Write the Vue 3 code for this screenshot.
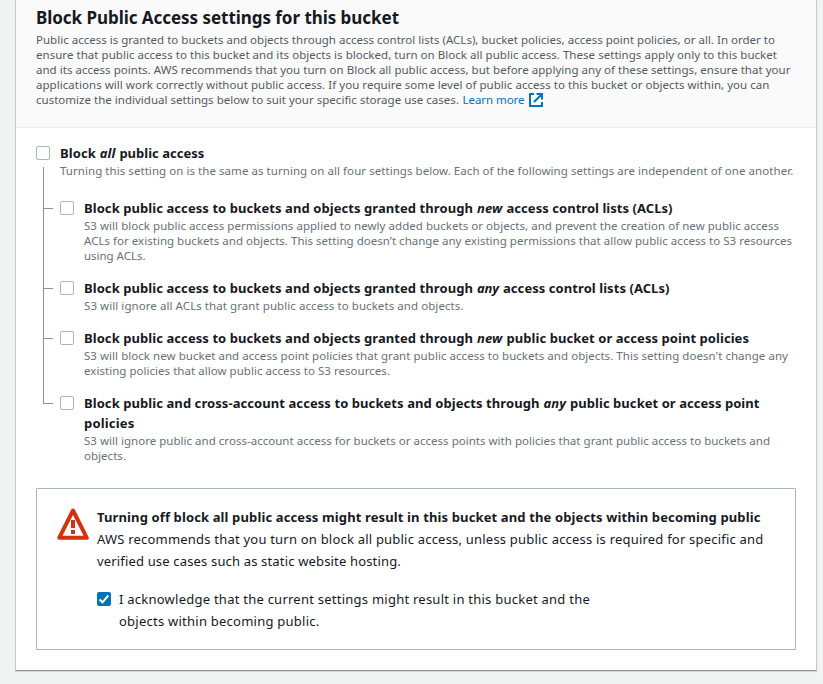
<script setup>
import { nextTick } from 'vue'

// Spreads a single line of text to the given width by adjusting its tracking.
const vFit = {
  async mounted(el, { value }) {
    await nextTick()
    const natural = el.getBoundingClientRect().width
    el.style.letterSpacing = `${(value - natural) / el.textContent.length}px`
  }
}

const intro = [
  ['Public access is granted to buckets and objects through access control lists (ACLs), bucket policies, access point policies, or all. In order to', 739],
  ['ensure that public access to this bucket and its objects is blocked, turn on Block all public access. These settings apply only to this bucket', 741],
  ['and its access points. AWS recommends that you turn on Block all public access, but before applying any of these settings, ensure that your', 754.5],
  ['applications will work correctly without public access. If you require some level of public access to this bucket or objects within, you can', 733.5]
]

const options = [
  {
    title: [['Block public access to buckets and objects granted through', 389], ['new', 25.5], ['access control lists (ACLs)', 166]],
    lines: [
      ['S3 will block public access permissions applied to newly added buckets or objects, and prevent the creation of new public access', 695],
      ["ACLs for existing buckets and objects. This setting doesn’t change any existing permissions that allow public access to S3 resources", 708],
      ['using ACLs.', 61.5]
    ]
  },
  {
    title: [['Block public access to buckets and objects granted through', 389], ['any', 22], ['access control lists (ACLs)', 166.5]],
    lines: [['S3 will ignore all ACLs that grant public access to buckets and objects.', 379.5]]
  },
  {
    title: [['Block public access to buckets and objects granted through', 389], ['new', 25.5], ['public bucket or access point policies', 242.5]],
    lines: [
      ["S3 will block new bucket and access point policies that grant public access to buckets and objects. This setting doesn't change any", 704],
      ['existing policies that allow public access to S3 resources.', 306]
    ]
  },
  {
    title: [['Block public and cross-account access to buckets and objects through', 455.5], ['any', 22.5], ['public bucket or access point', 189.5]],
    rest: ['policies', 50.5],
    lines: [
      ['S3 will ignore public and cross-account access for buckets or access points with policies that grant public access to buckets and', 686],
      ['objects.', 42]
    ]
  }
]
</script>

<template>
  <main class="page">
    <section class="card">
      <header class="card-header">
        <h2 class="heading"><span v-fit="363">Block Public Access settings for this bucket</span></h2>
        <p class="small intro">
          <span v-for="l in intro" :key="l[0]" class="line"><span v-fit="l[1]">{{ l[0] }}</span></span>
          <span class="line split">
            <span v-fit="423">customize the individual settings below to suit your specific storage use cases.</span>
            <a class="link"><span v-fit="62">Learn more</span>
              <svg class="ext" viewBox="0 0 14 14"><path d="M5 1H1v12h12V9M7.500 1H13v5.500M12.500 1.500 5 9" /></svg>
            </a>
          </span>
        </p>
      </header>

      <div class="body">
        <div class="option">
          <span class="box"></span>
          <div>
            <div class="title lead"><span v-fit="36">Block</span><em v-fit="16">all</em><span v-fit="85">public access</span></div>
            <div class="small muted"><span class="line"><span v-fit="733.3">Turning this setting on is the same as turning on all four settings below. Each of the following settings are independent of one another.</span></span></div>
          </div>
        </div>

        <ul class="tree">
          <li v-for="(o, i) in options" :key="i" class="option child">
            <span class="box"></span>
            <div>
              <div class="title">
                <span v-fit="o.title[0][1]">{{ o.title[0][0] }}</span><em v-fit="o.title[1][1]">{{ o.title[1][0] }}</em><span v-fit="o.title[2][1]">{{ o.title[2][0] }}</span>
              </div>
              <div v-if="o.rest" class="title"><span v-fit="o.rest[1]">{{ o.rest[0] }}</span></div>
              <div class="small muted">
                <span v-for="l in o.lines" :key="l[0]" class="line"><span v-fit="l[1]">{{ l[0] }}</span></span>
              </div>
            </div>
          </li>
        </ul>

        <div class="alert">
          <svg class="warn" viewBox="0 0 32 32">
            <path class="tri" d="M16 2.500 29.800 29.800H2.200Z" />
            <path class="bang" d="M14 12h4v8h-4zM14 22h4v4h-4z" />
          </svg>
          <div class="alert-text">
            <div class="strong"><span v-fit="663.5">Turning off block all public access might result in this bucket and the objects within becoming public</span></div>
            <span class="line"><span v-fit="666.5">AWS recommends that you turn on block all public access, unless public access is required for specific and</span></span>
            <span class="line"><span v-fit="304">verified use cases such as static website hosting.</span></span>
            <div class="ack">
              <span class="box checked">
                <svg viewBox="0 0 14 14"><path d="M2.500 7.500 5.500 10.300 11.300 3.500" /></svg>
              </span>
              <div>
                <span class="line"><span v-fit="471">I acknowledge that the current settings might result in this bucket and the</span></span>
                <span class="line"><span v-fit="200.5">objects within becoming public.</span></span>
              </div>
            </div>
          </div>
        </div>
      </div>
    </section>
  </main>
</template>

<style>
body {
  background: #f2f3f3;
}
</style>

<style scoped>
.page {
  box-sizing: border-box;
  height: 684px;
  padding: 0 6px 13px 15px;
  background: #f2f3f3;
  color: #16191f;
  font-family: "Noto Sans", "Open Sans", sans-serif;
  overflow: hidden;
}
.card {
  box-sizing: border-box;
  height: 671px;
  background: #fff;
  border: 1px solid #c7cccc;
  border-top: 0;
  border-bottom-color: #879196;
  box-shadow: 0 1px 1px rgba(0, 28, 36, 0.12);
}
.card-header {
  padding: 7px 20px 20px;
  background: #fafafa;
  border-bottom: 1px solid #eaeded;
}
.heading {
  margin: 0 0 3px;
  font-size: 17px;
  line-height: 22px;
  font-weight: 700;
  white-space: nowrap;
}
.small {
  margin: 0;
  font-size: 11.5px;
  line-height: 15px;
}
.intro {
  color: #545b64;
}
.muted {
  color: #687078;
}
.line {
  display: block;
  white-space: nowrap;
}
.split {
  display: flex;
  gap: 3.5px;
}
.link {
  display: flex;
  gap: 4.5px;
  color: #0073bb;
}
.ext {
  width: 14px;
  height: 14px;
  margin-top: 1px;
  fill: none;
  stroke: currentColor;
  stroke-width: 2;
}
.body {
  padding: 15px 20px 0;
}
.option {
  display: flex;
  gap: 10px;
}
.box {
  box-sizing: border-box;
  flex: none;
  width: 14px;
  height: 14px;
  margin-top: 3px;
  border: 1px solid #aab7b8;
  border-radius: 2px;
  background: #fff;
}
.title {
  display: flex;
  gap: 4px;
  font-size: 13px;
  line-height: 20px;
  font-weight: 700;
  white-space: nowrap;
}
.lead {
  gap: 3.7px;
}
.tree {
  list-style: none;
  display: flex;
  flex-direction: column;
  gap: 15px;
  margin: 20px 0 0 24px;
  padding: 0;
}
.child {
  position: relative;
}
.child::before {
  content: "";
  position: absolute;
  left: -17px;
  top: -16px;
  bottom: -11px;
  border-left: 1px solid #879596;
}
.child:first-child::before {
  top: -31px;
}
.child:last-child::before {
  bottom: auto;
  height: 27px;
}
.child::after {
  content: "";
  position: absolute;
  left: -17px;
  top: 10px;
  width: 10px;
  border-top: 1px solid #879596;
}
.alert {
  box-sizing: border-box;
  display: flex;
  gap: 8px;
  height: 162px;
  margin-top: 25px;
  padding: 17px 20px;
  border: 1px solid #aab7b8;
  border-radius: 1px;
  font-size: 13px;
  line-height: 22px;
}
.warn {
  flex: none;
  width: 32px;
  height: 32px;
  margin-top: 2px;
}
.tri {
  fill: none;
  stroke: #d13212;
  stroke-width: 4;
  stroke-linejoin: round;
}
.bang {
  fill: #d13212;
}
.strong {
  font-size: 13px;
  font-weight: 700;
  white-space: nowrap;
}
.ack {
  display: flex;
  gap: 8px;
  margin-top: 16px;
}
.ack .box {
  margin-top: 4px;
}
.checked {
  border: 0;
  background: #0073bb;
}
.checked svg {
  display: block;
  width: 14px;
  height: 14px;
  fill: none;
  stroke: #fff;
  stroke-width: 2;
}
</style>
